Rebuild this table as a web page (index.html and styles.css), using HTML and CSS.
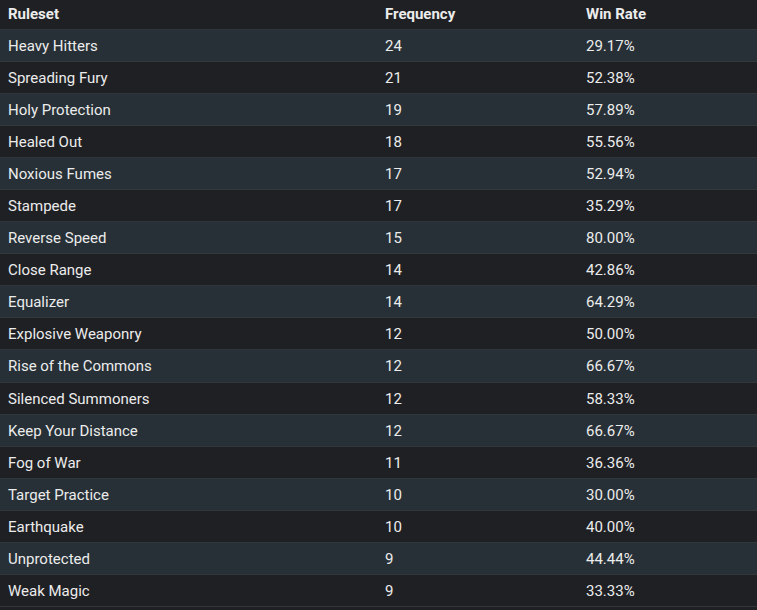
FILE: index.html
```html
<!DOCTYPE html>
<html>
<head>
<meta charset="utf-8">
<link rel="stylesheet" href="styles.css">
</head>
<body>
<table class="stats">
  <thead>
    <tr><th class="c1">Ruleset</th><th class="c2">Frequency</th><th class="c3">Win Rate</th></tr>
  </thead>
  <tbody>
    <tr><td>Heavy Hitters</td><td>24</td><td>29.17%</td></tr>
    <tr><td>Spreading Fury</td><td>21</td><td>52.38%</td></tr>
    <tr><td>Holy Protection</td><td>19</td><td>57.89%</td></tr>
    <tr><td>Healed Out</td><td>18</td><td>55.56%</td></tr>
    <tr><td>Noxious Fumes</td><td>17</td><td>52.94%</td></tr>
    <tr><td>Stampede</td><td>17</td><td>35.29%</td></tr>
    <tr><td>Reverse Speed</td><td>15</td><td>80.00%</td></tr>
    <tr><td>Close Range</td><td>14</td><td>42.86%</td></tr>
    <tr><td>Equalizer</td><td>14</td><td>64.29%</td></tr>
    <tr><td>Explosive Weaponry</td><td>12</td><td>50.00%</td></tr>
    <tr><td>Rise of the Commons</td><td>12</td><td>66.67%</td></tr>
    <tr><td>Silenced Summoners</td><td>12</td><td>58.33%</td></tr>
    <tr><td>Keep Your Distance</td><td>12</td><td>66.67%</td></tr>
    <tr><td>Fog of War</td><td>11</td><td>36.36%</td></tr>
    <tr><td>Target Practice</td><td>10</td><td>30.00%</td></tr>
    <tr><td>Earthquake</td><td>10</td><td>40.00%</td></tr>
    <tr><td>Unprotected</td><td>9</td><td>44.44%</td></tr>
    <tr><td>Weak Magic</td><td>9</td><td>33.33%</td></tr>
  </tbody>
</table>
</body>
</html>
```
FILE: styles.css
```css
html, body {
  margin: 0;
  padding: 0;
  background: #1f2024;
}
body {
  font-family: Roboto, "Liberation Sans", sans-serif;
  font-size: 15px;
  color: #ececec;
}
.stats {
  width: 757px;
  border-collapse: collapse;
  table-layout: fixed;
}
.stats th {
  text-align: left;
  font-weight: 700;
  height: 29px;
  padding: 0 8px;
  vertical-align: middle;
  line-height: 29px;
}
.c1 { width: 361px; }
.c2 { width: 185px; }
.stats td {
  height: 30.06px;
  padding: 1px 8px 0;
  line-height: 30px;
  border-top: 1px solid #32373c;
  vertical-align: middle;
}
.stats tbody tr:nth-child(odd) td {
  background: #263036;
}
.stats tbody tr:last-child td {
  border-bottom: 1px solid #32373c;
}
```
